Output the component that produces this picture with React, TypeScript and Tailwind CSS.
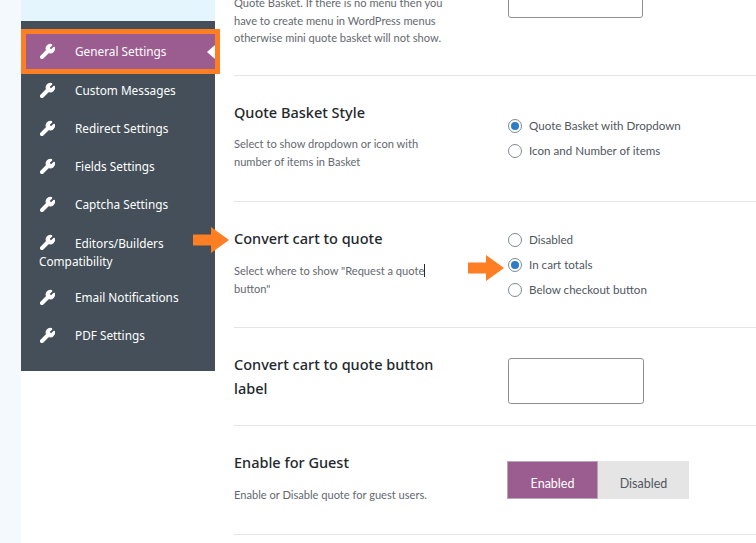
import { Wrench } from 'lucide-react';

const MENU = ['General Settings', 'Custom Messages', 'Redirect Settings', 'Fields Settings', 'Captcha Settings', 'Editors/Builders Compatibility', 'Email Notifications', 'PDF Settings'];

function Radio({ label, checked }: { label: string; checked?: boolean }) {
  return (
    <div className="flex h-[25px] items-center gap-[7px]">
      <span className="flex h-[14px] w-[14px] items-center justify-center rounded-full border border-[#7e8993] bg-white">
        {checked && <span className="h-[8px] w-[8px] rounded-full bg-[#2e7cc4]" />}
      </span>
      <span className="font-['Lato',sans-serif] text-[11.6px] text-[#50575e]">{label}</span>
    </div>
  );
}

function Arrow({ className }: { className: string }) {
  return (
    <svg className={`absolute ${className}`} width="36" height="26" viewBox="0 0 36 26">
      <path d="M0 7.5H18V0L36 13L18 26V18.5H0Z" fill="#fd7e23" />
    </svg>
  );
}

function Title({ children }: { children: React.ReactNode }) {
  return <h3 className="-mt-[1px] text-[14.5px] leading-[24px] font-medium text-[#23282d]">{children}</h3>;
}

function Desc({ children }: { children: React.ReactNode }) {
  return <p className="font-['Lato',sans-serif] text-[11.1px] leading-[17.5px] text-[#646970]">{children}</p>;
}

export default function App() {
  return (
    <div className="relative flex h-[543px] w-[756px] overflow-hidden bg-white font-['Noto_Sans',sans-serif]">
      {/* page edge */}
      <div className="w-[21px] shrink-0 bg-[#f4f9fd]" />

      {/* sidebar */}
      <div className="w-[194px] shrink-0">
        <div className="h-[21px] bg-[#e5f5fd]" />
        <ul className="bg-[#444f59] pt-[12px] pb-[16px]">
          {MENU.map((item, i) => (
            <li key={item}
              className={`relative text-[11.8px] leading-[18.5px] text-white ${i === 0 ? 'bg-[#9b5c8f] border-b border-[#444f59]' : ''} ${i === 5 ? 'h-[55px] pt-[10.5px] pl-[18px]' : 'flex h-[38.1px] items-center pl-[18px]'}`}>
              {i === 5 ? (
                <span className="block">
                  <Wrench className="mr-[19px] inline-block h-[17px] w-[17px] fill-white align-[-3px]" strokeWidth={1.5} />
                  {item}
                </span>
              ) : (
                <>
                  <Wrench className="mr-[19px] h-[17px] w-[17px] shrink-0 fill-white" strokeWidth={1.5} />
                  <span>{item}</span>
                </>
              )}
              {i === 0 && <span className="absolute top-1/2 right-0 -translate-y-1/2 border-y-[7px] border-r-[8px] border-y-transparent border-r-white" />}
            </li>
          ))}
        </ul>
      </div>

      {/* settings */}
      <div className="ml-[19px] flex-1 -mt-[6px]">
        <div className="flex h-[82px] border-b border-[#e5e5e5]">
          <div className="w-[274px]">
            <Desc>Quote Basket. If there is no menu then you<br />have to create menu in WordPress menus<br />otherwise mini quote basket will not show.</Desc>
          </div>
          <div className="-mt-[20px] h-[44px] w-[135px] rounded-[3px] border border-[#8c8f94] bg-white" />
        </div>

        <div className="flex h-[126px] border-b border-[#e5e5e5] pt-[25px]">
          <div className="w-[274px]">
            <Title>Quote Basket Style</Title>
            <div className="mt-[11px]"><Desc>Select to show dropdown or icon with<br />number of items in Basket</Desc></div>
          </div>
          <div className="mt-[12px]">
            <Radio label="Quote Basket with Dropdown" checked />
            <Radio label="Icon and Number of items" />
          </div>
        </div>

        <div className="flex h-[126px] border-b border-[#e5e5e5] pt-[25px]">
          <div className="w-[274px]">
            <Title>Convert cart to quote</Title>
            <div className="mt-[12px]"><Desc>Select where to show "Request a quote<span className="border-r border-[#23282d]" /><br />button"</Desc></div>
          </div>
          <div>
            <Radio label="Disabled" />
            <Radio label="In cart totals" checked />
            <Radio label="Below checkout button" />
          </div>
        </div>

        <div className="flex h-[98px] border-b border-[#e5e5e5] pt-[25px]">
          <div className="w-[274px]"><Title>Convert cart to quote button<br />label</Title></div>
          <div className="mt-[5px] h-[46px] w-[136px] rounded-[3px] border border-[#8c8f94] bg-white" />
        </div>

        <div className="flex h-[109px] border-b border-[#e5e5e5] pt-[25px]">
          <div className="w-[273px]">
            <Title>Enable for Guest</Title>
            <div className="mt-[12px]"><Desc>Enable or Disable quote for guest users.</Desc></div>
          </div>
          <div className="mt-[10px] flex h-[38px] w-[182px] font-['Lato',sans-serif] text-[12.5px]">
            <span className="flex w-[91px] items-end justify-center border border-[#b5a8b3] bg-[#9b5c8f] pb-[4px] text-white">Enabled</span>
            <span className="flex w-[91px] items-end justify-center bg-[#e5e5e5] pb-[5px] text-[#50575e]">Disabled</span>
          </div>
        </div>
      </div>

      {/* annotations */}
      <div className="absolute top-[29px] left-[21px] h-[45px] w-[199px] border-[5px] border-[#fd7e23]" />
      <Arrow className="top-[227px] left-[193px]" />
      <Arrow className="top-[255px] left-[468px]" />
    </div>
  );
}
